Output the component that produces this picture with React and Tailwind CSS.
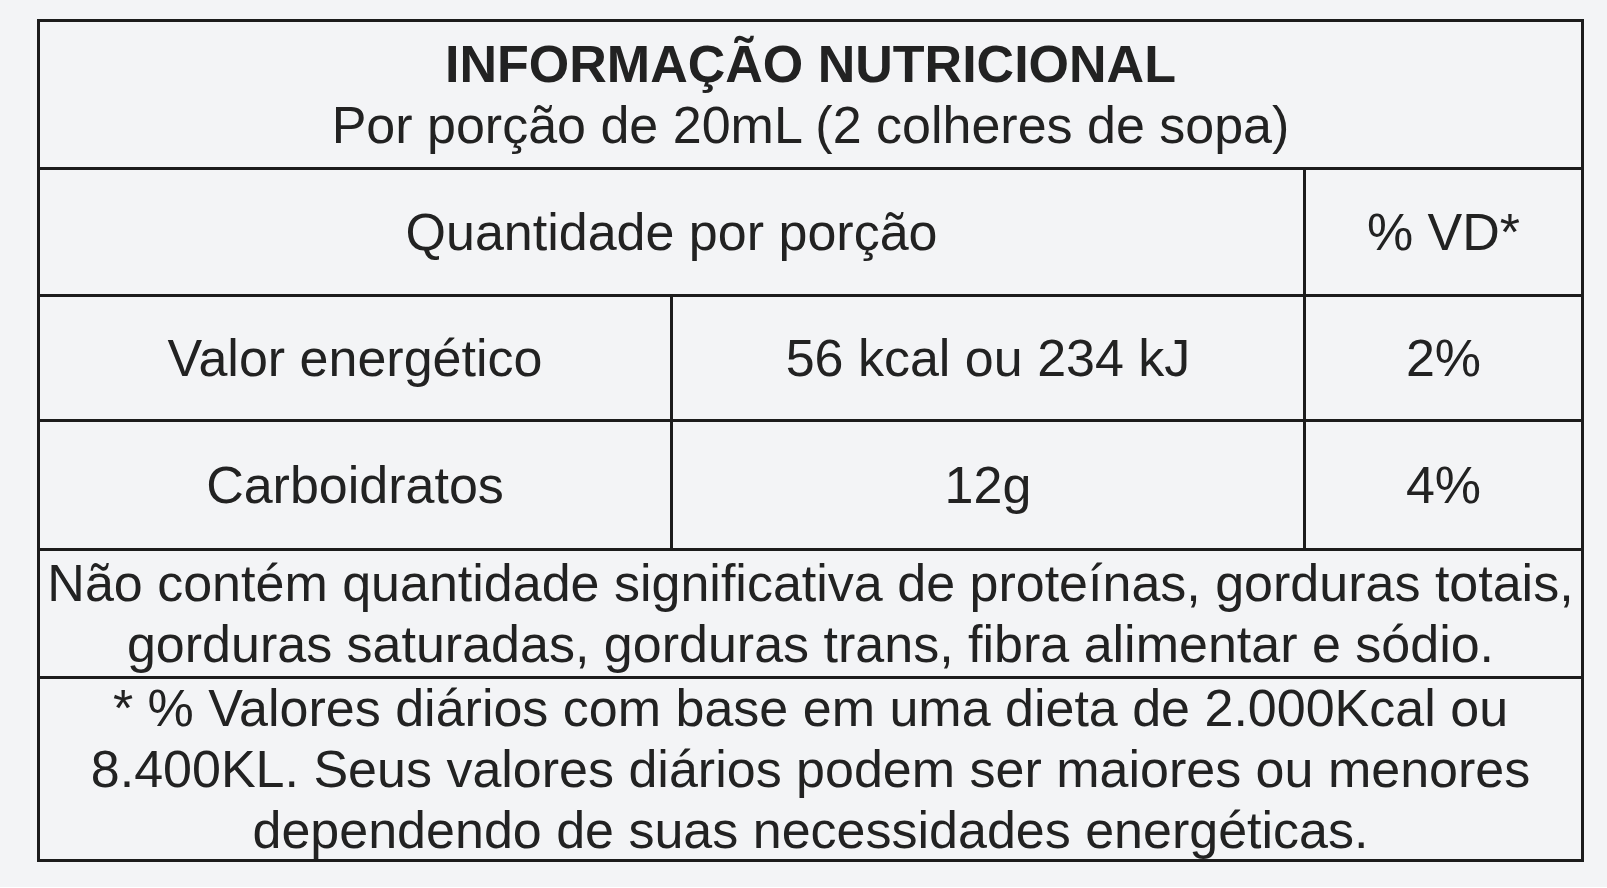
import React from 'react';

const rows = [
  { label: 'Valor energético', amount: '56 kcal ou 234 kJ', vd: '2%', h: 'h-[125px]' },
  { label: 'Carboidratos', amount: '12g', vd: '4%', h: 'h-[129px]' },
];

const NutritionTable = () => {
  return (
    <div className="ml-[37px] mt-[19px] w-[1547px] border-[3px] border-[#1c1c1c] text-[#222] text-[52px] leading-[61px] text-center">
      {/* header */}
      <div className="h-[148px] border-b-[3px] border-[#1c1c1c] flex flex-col justify-center">
        <div className="font-bold">INFORMAÇÃO NUTRICIONAL</div>
        <div>Por porção de 20mL (2 colheres de sopa)</div>
      </div>

      <div className="h-[127px] border-b-[3px] border-[#1c1c1c] flex">
        <div className="w-[1266px] border-r-[3px] border-[#1c1c1c] flex items-center justify-center">
          Quantidade por porção
        </div>
        <div className="flex-1 flex items-center justify-center">% VD*</div>
      </div>

      {rows.map(row => (
        <div key={row.label} className={`${row.h} border-b-[3px] border-[#1c1c1c] flex`}>
          <div className="w-[633px] border-r-[3px] border-[#1c1c1c] flex items-center justify-center">
            {row.label}
          </div>
          <div className="w-[633px] border-r-[3px] border-[#1c1c1c] flex items-center justify-center">
            {row.amount}
          </div>
          <div className="flex-1 flex items-center justify-center">{row.vd}</div>
        </div>
      ))}

      <div className="h-[128px] border-b-[3px] border-[#1c1c1c] flex flex-col justify-center whitespace-nowrap">
        <div>Não contém quantidade significativa de proteínas, gorduras totais,</div>
        <div>gorduras saturadas, gorduras trans, fibra alimentar e sódio.</div>
      </div>

      <div className="h-[180px] flex flex-col justify-center whitespace-nowrap">
        <div>* % Valores diários com base em uma dieta de 2.000Kcal ou</div>
        <div>8.400KL. Seus valores diários podem ser maiores ou menores</div>
        <div>dependendo de suas necessidades energéticas.</div>
      </div>
    </div>
  );
};

export default function App() {
  return (
    <div className="min-h-screen w-full bg-[#f3f4f6] overflow-hidden pt-px -mt-px" style={{ fontFamily: '"Liberation Sans", Arial, sans-serif' }}>
      <NutritionTable />
    </div>
  );
}
